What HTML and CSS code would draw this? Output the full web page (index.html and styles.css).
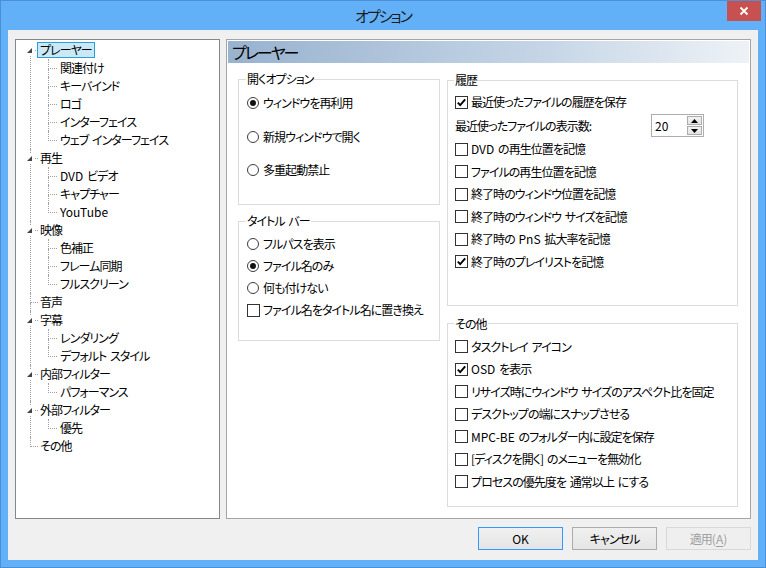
FILE: index.html
```html
<!DOCTYPE html>
<html lang="ja">
<head>
<meta charset="utf-8">
<title>オプション</title>
<link rel="stylesheet" href="styles.css">
</head>
<body>
<div class="window">
  <div class="titlebar">
    <span class="title">オプション</span>
    <div class="close"><svg width="10" height="10" viewBox="0 0 10 10"><path d="M1.5 1.5L8.5 8.5M8.5 1.5L1.5 8.5" stroke="#fff" stroke-width="1.8" fill="none"/></svg></div>
  </div>
  <div class="client">
    <div class="main">
      <div class="tree">
        <ul class="roots">
          <li class="root"><div class="row"><span class="twisty"><svg width="9" height="9" viewBox="0 0 9 9"><polygon points="6,2 6,7 1,7" fill="#444"/></svg></span><span class="label sel">プレーヤー</span></div>
            <ul class="kids">
              <li class="kid"><div class="row"><span class="label">関連付け</span></div></li>
              <li class="kid"><div class="row"><span class="label">キーバインド</span></div></li>
              <li class="kid"><div class="row"><span class="label">ロゴ</span></div></li>
              <li class="kid"><div class="row"><span class="label">インターフェイス</span></div></li>
              <li class="kid"><div class="row"><span class="label">ウェブ インターフェイス</span></div></li>
            </ul>
          </li>
          <li class="root"><div class="row"><span class="twisty"><svg width="9" height="9" viewBox="0 0 9 9"><polygon points="6,2 6,7 1,7" fill="#444"/></svg></span><span class="label">再生</span></div>
            <ul class="kids">
              <li class="kid"><div class="row"><span class="label"><span class="lat">DVD</span> ビデオ</span></div></li>
              <li class="kid"><div class="row"><span class="label">キャプチャー</span></div></li>
              <li class="kid"><div class="row"><span class="label"><span class="lat">YouTube</span></span></div></li>
            </ul>
          </li>
          <li class="root"><div class="row"><span class="twisty"><svg width="9" height="9" viewBox="0 0 9 9"><polygon points="6,2 6,7 1,7" fill="#444"/></svg></span><span class="label">映像</span></div>
            <ul class="kids">
              <li class="kid"><div class="row"><span class="label">色補正</span></div></li>
              <li class="kid"><div class="row"><span class="label">フレーム同期</span></div></li>
              <li class="kid"><div class="row"><span class="label">フルスクリーン</span></div></li>
            </ul>
          </li>
          <li class="root"><div class="row"><span class="label">音声</span></div></li>
          <li class="root"><div class="row"><span class="twisty"><svg width="9" height="9" viewBox="0 0 9 9"><polygon points="6,2 6,7 1,7" fill="#444"/></svg></span><span class="label">字幕</span></div>
            <ul class="kids">
              <li class="kid"><div class="row"><span class="label">レンダリング</span></div></li>
              <li class="kid"><div class="row"><span class="label">デフォルト スタイル</span></div></li>
            </ul>
          </li>
          <li class="root"><div class="row"><span class="twisty"><svg width="9" height="9" viewBox="0 0 9 9"><polygon points="6,2 6,7 1,7" fill="#444"/></svg></span><span class="label">内部フィルター</span></div>
            <ul class="kids">
              <li class="kid"><div class="row"><span class="label">パフォーマンス</span></div></li>
            </ul>
          </li>
          <li class="root"><div class="row"><span class="twisty"><svg width="9" height="9" viewBox="0 0 9 9"><polygon points="6,2 6,7 1,7" fill="#444"/></svg></span><span class="label">外部フィルター</span></div>
            <ul class="kids">
              <li class="kid"><div class="row"><span class="label">優先</span></div></li>
            </ul>
          </li>
          <li class="root"><div class="row"><span class="label">その他</span></div></li>
        </ul>
      </div>
      <div class="page">
        <div class="page-head">プレーヤー</div>
        <div class="page-body">
          <div class="col col-left">
            <fieldset class="grp grp-open">
              <legend>開くオプション</legend>
              <div class="opt"><span class="radio on"></span>ウィンドウを再利用</div>
              <div class="opt"><span class="radio"></span>新規ウィンドウで開く</div>
              <div class="opt"><span class="radio"></span>多重起動禁止</div>
            </fieldset>
            <fieldset class="grp grp-title">
              <legend>タイトル バー</legend>
              <div class="opt"><span class="radio"></span>フルパスを表示</div>
              <div class="opt"><span class="radio on"></span>ファイル名のみ</div>
              <div class="opt"><span class="radio"></span>何も付けない</div>
              <div class="opt"><span class="check"></span>ファイル名をタイトル名に置き換え</div>
            </fieldset>
          </div>
          <div class="col col-right">
            <fieldset class="grp grp-hist">
              <legend>履歴</legend>
              <div class="opt"><span class="check on"><svg width="11" height="11" viewBox="0 0 11 11"><path d="M1.8 5.6L4.2 8.1L9.2 2.4" stroke="#000" stroke-width="1.9" fill="none"/></svg></span>最近使ったファイルの履歴を保存</div>
              <div class="opt spin-row">最近使ったファイルの表示数:
                <div class="spin"><span class="spin-val">20</span>
                  <div class="spin-btns">
                    <span class="spin-btn"><svg width="7" height="4" viewBox="0 0 7 4"><polygon points="3.5,0 7,4 0,4" fill="#000"/></svg></span>
                    <span class="spin-btn"><svg width="7" height="4" viewBox="0 0 7 4"><polygon points="0,0 7,0 3.5,4" fill="#000"/></svg></span>
                  </div>
                </div>
              </div>
              <div class="opt"><span class="check"></span><span class="lat">DVD</span> の再生位置を記憶</div>
              <div class="opt"><span class="check"></span>ファイルの再生位置を記憶</div>
              <div class="opt"><span class="check"></span>終了時のウィンドウ位置を記憶</div>
              <div class="opt"><span class="check"></span>終了時のウィンドウ サイズを記憶</div>
              <div class="opt"><span class="check"></span>終了時の <span class="lat">PnS</span> 拡大率を記憶</div>
              <div class="opt"><span class="check on"><svg width="11" height="11" viewBox="0 0 11 11"><path d="M1.8 5.6L4.2 8.1L9.2 2.4" stroke="#000" stroke-width="1.9" fill="none"/></svg></span>終了時のプレイリストを記憶</div>
            </fieldset>
            <fieldset class="grp grp-other">
              <legend>その他</legend>
              <div class="opt"><span class="check"></span>タスクトレイ アイコン</div>
              <div class="opt"><span class="check on"><svg width="11" height="11" viewBox="0 0 11 11"><path d="M1.8 5.6L4.2 8.1L9.2 2.4" stroke="#000" stroke-width="1.9" fill="none"/></svg></span><span class="lat">OSD</span> を表示</div>
              <div class="opt"><span class="check"></span>リサイズ時にウィンドウ サイズのアスペクト比を固定</div>
              <div class="opt"><span class="check"></span>デスクトップの端にスナップさせる</div>
              <div class="opt"><span class="check"></span><span class="lat">MPC-BE</span> のフォルダー内に設定を保存</div>
              <div class="opt"><span class="check"></span>[ディスクを開く] のメニューを無効化</div>
              <div class="opt"><span class="check"></span>プロセスの優先度を 通常以上 にする</div>
            </fieldset>
          </div>
        </div>
      </div>
    </div>
    <div class="buttons">
      <button class="btn btn-default"><span class="lat">OK</span></button>
      <button class="btn">キャンセル</button>
      <button class="btn btn-disabled">適用<span class="lat">(<u>A</u>)</span></button>
    </div>
  </div>
</div>
</body>
</html>
```

FILE: styles.css
```css
html, body {
  margin: 0;
  padding: 0;
}
body {
  font-family: "Noto Sans CJK JP", "Noto Sans", sans-serif;
  font-size: 12px;
  font-feature-settings: "palt";
  letter-spacing: -0.95px;
  word-spacing: 2px;
  color: #000;
}
.lat {
  letter-spacing: 0;
}
.window {
  width: 766px;
  height: 568px;
  box-sizing: border-box;
  border: 1px solid #4b8fd6;
  background: #62b1f8;
  display: flex;
  flex-direction: column;
}
.titlebar {
  height: 29px;
  flex: none;
  display: flex;
  align-items: center;
  justify-content: center;
  position: relative;
}
.title {
  font-size: 15px;
  line-height: 20px;
  letter-spacing: -2px;
  color: #1a1a1a;
}
.close {
  position: absolute;
  right: 4px;
  top: 0;
  width: 34px;
  height: 20px;
  background: #c75050;
  display: flex;
  align-items: center;
  justify-content: center;
}
.client {
  flex: 1;
  margin: 0 7px 7px;
  background: #f0f0f0;
  padding: 9px 7px 10px;
  display: flex;
  flex-direction: column;
  box-sizing: border-box;
}
.main {
  display: flex;
  gap: 6px;
  height: 480px;
  flex: none;
}

/* tree */
.tree {
  width: 205px;
  box-sizing: border-box;
  border: 1px solid #828790;
  background: #fff;
  padding-top: 1px;
  flex: none;
}
.roots, .kids {
  list-style: none;
  margin: 0;
  padding: 0;
}
.root, .kid {
  position: relative;
}
.row {
  height: 18px;
  display: flex;
  align-items: center;
  white-space: nowrap;
}
.root > .row {
  padding-left: 21px;
}
.kid > .row {
  padding-left: 41px;
}
.label {
  position: relative;
  z-index: 1;
  line-height: 14px;
  padding: 0 2px;
  border: 1px solid transparent;
}
.label.sel {
  background: #cbe8f6;
  border-color: #26a0da;
}
.root::before,
.kid::before {
  content: "";
  position: absolute;
  top: 0;
  height: 9px;
  border-left: 1px dotted #a0a0a0;
  border-bottom: 1px dotted #a0a0a0;
}
.root::before {
  left: 14px;
  width: 7px;
}
.kid::before {
  left: 32px;
  width: 8px;
}
.roots > .root:first-child::before {
  border-left-color: transparent;
}
.root:not(:last-child)::after,
.kid:not(:last-child)::after {
  content: "";
  position: absolute;
  top: 10px;
  bottom: 0;
  border-left: 1px dotted #a0a0a0;
}
.root:not(:last-child)::after {
  left: 14px;
}
.kid:not(:last-child)::after {
  left: 32px;
}
.twisty {
  position: absolute;
  left: 10px;
  top: 5px;
  width: 9px;
  height: 9px;
  background: #fff;
  z-index: 2;
  display: block;
}
.twisty svg {
  display: block;
}

/* page */
.page {
  width: 525px;
  box-sizing: border-box;
  border: 1px solid #a5a5a5;
  background: #fff;
  padding: 1px;
  flex: none;
}
.page-head {
  height: 22px;
  background: linear-gradient(to right, #98b2cf, #c5d5e6 60%, #eef2f7);
  font-size: 16px;
  line-height: 22px;
  letter-spacing: -2px;
  padding-left: 4px;
}
.page-body {
  display: flex;
  gap: 7px;
  padding: 8px 0 0 10px;
}
.col {
  display: flex;
  flex-direction: column;
}
.col-left {
  width: 202px;
}
.col-right {
  width: 291px;
  margin-top: 1px;
}
.grp {
  margin: 0;
  border: 1px solid #dcdcdc;
  min-width: 0;
  display: flex;
  flex-direction: column;
}
.grp legend {
  padding: 0 1px;
  margin-left: -1px;
  line-height: 16px;
  font-size: 12px;
}
.col-left .grp {
  padding-left: 8px;
  padding-right: 4px;
}
.col-right .grp {
  padding-left: 7px;
  padding-right: 4px;
}
.grp-open {
  padding-top: 7px;
  padding-bottom: 25px;
  gap: 15.5px;
}
.grp-title {
  margin-top: 8px !important;
  padding-top: 6px;
  padding-bottom: 21px;
  gap: 4px;
}
.grp-hist {
  padding-top: 5px;
  padding-bottom: 34px;
  gap: 4.5px;
}
.grp-other {
  margin-top: 10px !important;
  padding-top: 6px;
  padding-bottom: 15px;
  gap: 4.5px;
}
.opt {
  height: 18px;
  display: flex;
  align-items: center;
  white-space: pre;
  line-height: 18px;
}
.radio {
  width: 12px;
  height: 12px;
  box-sizing: border-box;
  border: 1px solid #3c3c3c;
  border-radius: 50%;
  background: #fff;
  margin-right: 4px;
  flex: none;
  display: flex;
  align-items: center;
  justify-content: center;
}
.radio.on::after {
  content: "";
  width: 6px;
  height: 6px;
  border-radius: 50%;
  background: #111;
}
.check {
  width: 13px;
  height: 13px;
  box-sizing: border-box;
  border: 1px solid #333;
  background: #fff;
  margin-right: 3px;
  flex: none;
  display: flex;
  align-items: center;
  justify-content: center;
}
.check svg {
  display: block;
}
.spin-row {
  height: 23px;
  margin: -1.5px 0;
  white-space: nowrap;
}
.spin {
  margin-left: auto;
  margin-right: 29px;
  width: 53px;
  height: 23px;
  box-sizing: border-box;
  border: 1px solid #abadb3;
  background: #fff;
  display: flex;
  align-items: center;
  letter-spacing: 0;
}
.spin-val {
  padding-left: 3px;
  flex: 1;
  font-size: 12px;
}
.spin-btns {
  display: flex;
  flex-direction: column;
  gap: 1px;
  margin-right: 1px;
}
.spin-btn {
  width: 15px;
  height: 9px;
  box-sizing: border-box;
  border: 1px solid #acacac;
  background: linear-gradient(#f2f2f2, #e3e3e3);
  display: flex;
  align-items: center;
  justify-content: center;
}
.spin-btn svg {
  display: block;
}

/* buttons */
.buttons {
  display: flex;
  justify-content: flex-end;
  gap: 9px;
  margin-top: 8px;
}
.btn {
  width: 85px;
  height: 23px;
  box-sizing: border-box;
  border: 1px solid #acacac;
  background: linear-gradient(#f0f0f0, #e5e5e5);
  font-family: "Noto Sans CJK JP", "Noto Sans", sans-serif;
  font-size: 12px;
  font-feature-settings: "palt";
  letter-spacing: -0.95px;
  color: #000;
  padding: 0;
  line-height: 20px;
}
.btn-default {
  border-color: #3399ff;
}
.btn-disabled {
  border-color: #d9d9d9;
  background: #efefef;
  color: #a0a0a0;
}
.btn u {
  text-underline-offset: 2px;
}
```
